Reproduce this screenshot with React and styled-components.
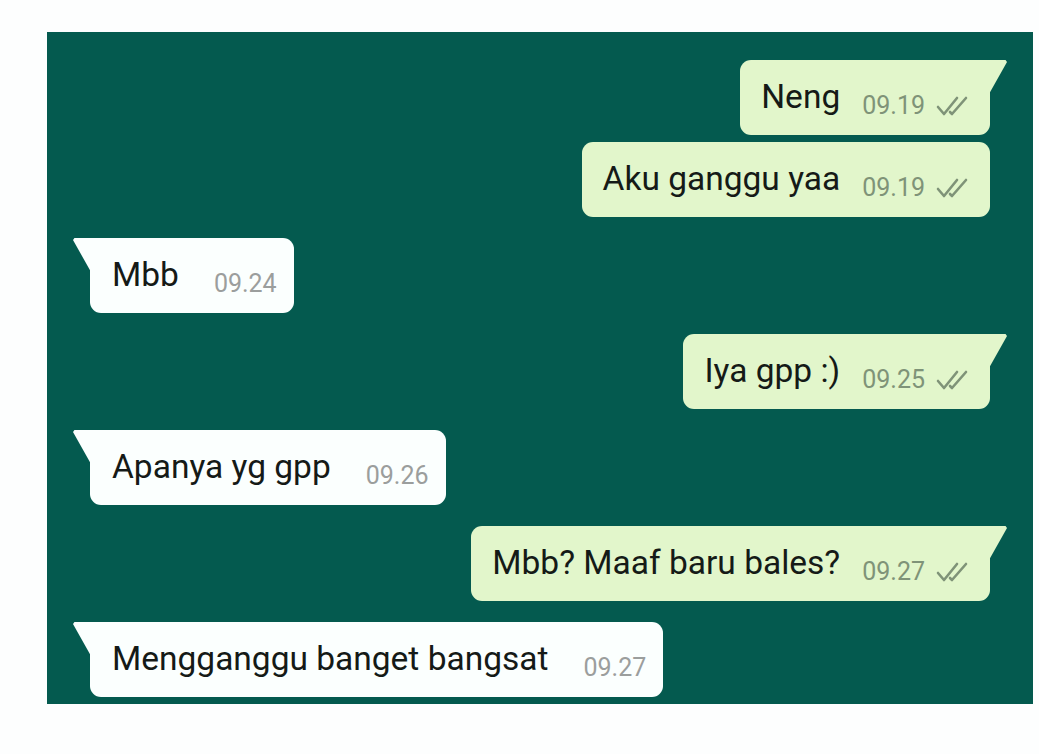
import React from 'react';
import styled, { createGlobalStyle, css } from 'styled-components';

const GlobalStyle = createGlobalStyle`
  html, body {
    margin: 0;
    padding: 0;
    background: #ffffff;
  }
  body {
    font-family: Roboto, "Noto Sans", "Liberation Sans", sans-serif;
  }
`;

const Page = styled.div`
  width: 1039px;
  height: 754px;
  padding: 32px 6px 0 47px;
  box-sizing: border-box;
  background: #fdfefe;
`;

const ChatPanel = styled.div`
  width: 986px;
  height: 672px;
  box-sizing: border-box;
  background: #045a4f;
  padding: 28px 43px 0 43px;
  display: flex;
  flex-direction: column;
  overflow: hidden;
`;

const Row = styled.div`
  display: flex;
  justify-content: ${(p) => (p.$out ? 'flex-end' : 'flex-start')};
  margin-top: ${(p) => (p.$first ? '0' : p.$grouped ? '7px' : '21px')};
`;

const Bubble = styled.div`
  position: relative;
  height: 75px;
  flex-shrink: 0;
  box-sizing: border-box;
  display: flex;
  align-items: center;
  border-radius: 11px;
  ${(p) =>
    p.$out
      ? css`
          background: #e2f6cb;
          padding: 0 20px 0 21px;
          gap: 22px;
        `
      : css`
          background: #fbfffe;
          padding: 0 17px 0 22px;
          gap: 35px;
        `}
  ${(p) =>
    p.$tail &&
    (p.$out
      ? css`
          border-top-right-radius: 0;
          &::after {
            content: '';
            position: absolute;
            top: 0;
            right: -17px;
            width: 18px;
            height: 34px;
            background: #e2f6cb;
            clip-path: polygon(0 0, 92% 0, 100% 6%, 0 100%);
          }
        `
      : css`
          border-top-left-radius: 0;
          &::before {
            content: '';
            position: absolute;
            top: 0;
            left: -17px;
            width: 18px;
            height: 34px;
            background: #fbfffe;
            clip-path: polygon(8% 0, 100% 0, 100% 100%, 0 6%);
          }
        `)}
`;

const Text = styled.span`
  font-size: 33.5px;
  line-height: 40px;
  color: #151a17;
  white-space: nowrap;
  margin-top: -2px;
`;

const Meta = styled.span`
  display: flex;
  align-items: center;
  gap: 11px;
  margin-top: 16px;
`;

const Time = styled.span`
  font-size: 25px;
  line-height: 30px;
  color: ${(p) => (p.$out ? '#7f9378' : '#9b9e9d')};
  white-space: nowrap;
`;

const Ticks = () => (
  <svg width="34" height="22" viewBox="0 0 34 22" fill="none">
    <path
      d="M2 12 L8 19 L21 3 M14 17 L16 19 L30 3"
      stroke="#7f9378"
      strokeWidth="2.6"
      strokeLinecap="round"
      strokeLinejoin="round"
    />
  </svg>
);

const messages = [
  { text: 'Neng', time: '09.19', out: true, tail: true },
  { text: 'Aku ganggu yaa', time: '09.19', out: true, grouped: true },
  { text: 'Mbb', time: '09.24', out: false, tail: true },
  { text: 'Iya gpp :)', time: '09.25', out: true, tail: true },
  { text: 'Apanya yg gpp', time: '09.26', out: false, tail: true },
  { text: 'Mbb? Maaf baru bales?', time: '09.27', out: true, tail: true },
  { text: 'Mengganggu banget bangsat', time: '09.27', out: false, tail: true },
];

export default function App() {
  return (
    <>
      <GlobalStyle />
      <Page>
        <ChatPanel>
          {messages.map((m, i) => (
            <Row key={i} $out={m.out} $first={i === 0} $grouped={m.grouped}>
              <Bubble $out={m.out} $tail={m.tail}>
                <Text>{m.text}</Text>
                <Meta>
                  <Time $out={m.out}>{m.time}</Time>
                  {m.out && <Ticks />}
                </Meta>
              </Bubble>
            </Row>
          ))}
        </ChatPanel>
      </Page>
    </>
  );
}
